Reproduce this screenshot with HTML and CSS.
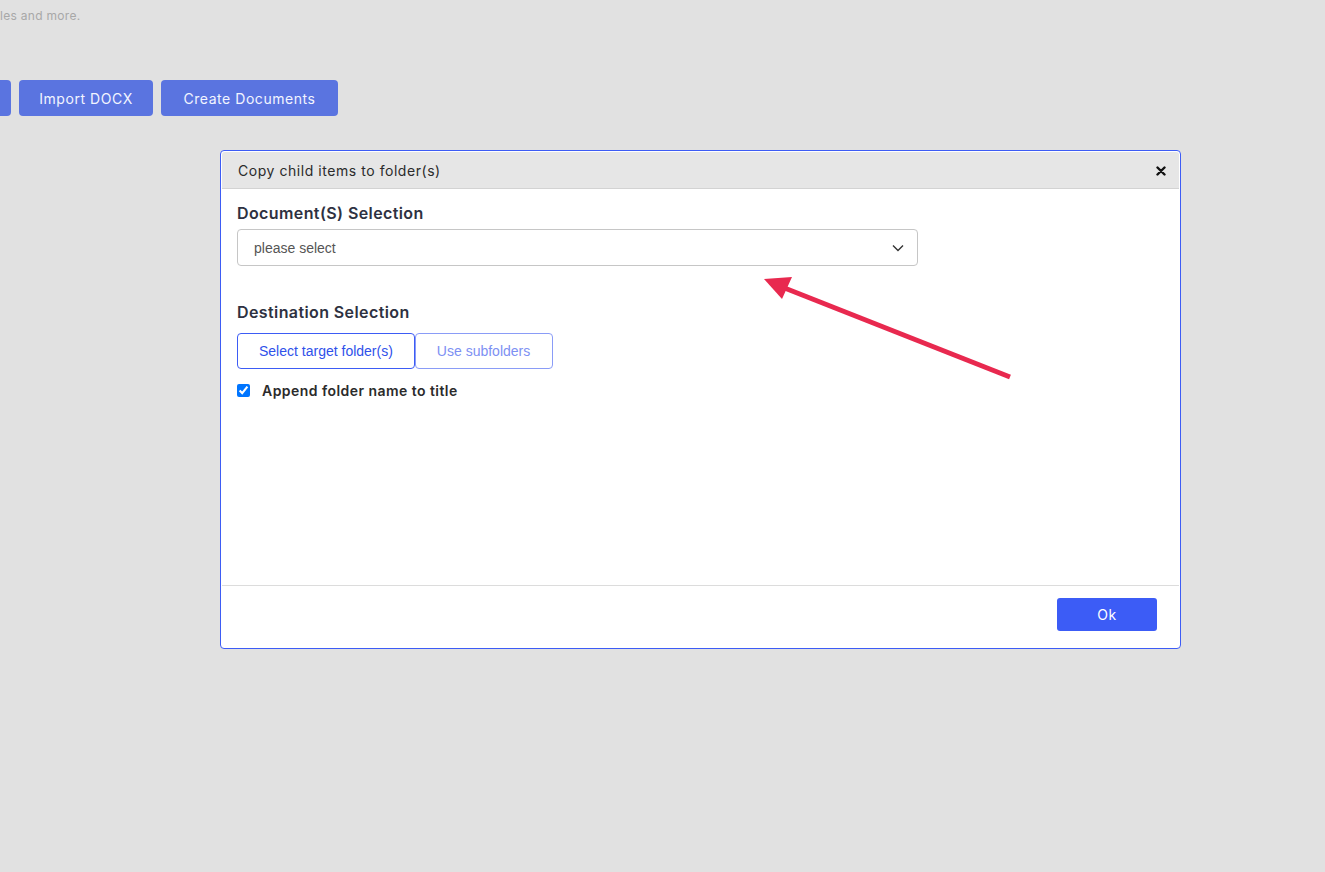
FILE: index.html
```html
<!DOCTYPE html>
<html lang="en">
<head>
<meta charset="utf-8">
<title>Copy child items to folder(s)</title>
<link rel="stylesheet" href="styles.css">
</head>
<body>
<div class="page">
  <p class="intro">les and more.</p>
  <div class="toolbar">
    <button class="tbtn tbtn-partial" aria-label="Export"></button>
    <button class="tbtn tbtn-import">Import DOCX</button>
    <button class="tbtn tbtn-create">Create Documents</button>
  </div>
</div>

<div class="dialog">
  <div class="dialog-header">
    <span class="dialog-title">Copy child items to folder(s)</span>
    <svg class="close" width="10" height="10" viewBox="0 0 10 10"><path d="M1.5 1.5 L8.5 8.5 M8.5 1.5 L1.5 8.5" stroke="#111" stroke-width="2.4" stroke-linecap="round"/></svg>
  </div>
  <div class="dialog-body">
    <h3 class="section-title">Document(S) Selection</h3>
    <div class="select">
      <span>please select</span>
      <svg width="12" height="8" viewBox="0 0 12 8"><path d="M1 1.5 L6 6.5 L11 1.5" fill="none" stroke="#333" stroke-width="1.4"/></svg>
    </div>
    <h3 class="section-title dest">Destination Selection</h3>
    <div class="seg">
      <button class="seg-btn active">Select target folder(s)</button>
      <button class="seg-btn">Use subfolders</button>
    </div>
    <label class="check">
      <input type="checkbox" checked>
      <span>Append folder name to title</span>
    </label>
  </div>
  <div class="dialog-footer">
    <button class="ok">Ok</button>
  </div>
</div>

<svg class="annot" width="1325" height="872" viewBox="0 0 1325 872">
  <line x1="1010" y1="377" x2="782" y2="287" stroke="#e8294f" stroke-width="5"/>
  <polygon points="764,279 792,277 782,299" fill="#e8294f"/>
</svg>
</body>
</html>
```
FILE: styles.css
```css
html, body {
  margin: 0;
  padding: 0;
}
body {
  background: #e1e1e1;
  width: 1325px;
  height: 872px;
  overflow: hidden;
  position: relative;
  font-family: Inter, "Open Sans", sans-serif;
}
.page {
  padding-top: 8px;
}
.intro {
  margin: 0;
  font-size: 12px;
  line-height: 16px;
  color: #a8a8a8;
  letter-spacing: 0.3px;
}
.toolbar {
  display: flex;
  gap: 8px;
  margin-top: 56px;
  margin-left: -89px;
}
.tbtn {
  height: 36px;
  border: none;
  border-radius: 4px;
  background: #5a74e0;
  color: #f2f4ff;
  font-family: Inter, "Open Sans", sans-serif;
  font-size: 14px;
  letter-spacing: 0.55px;
  padding: 0;
}
.tbtn-partial {
  width: 100px;
}
.tbtn-import {
  width: 134px;
}
.tbtn-create {
  width: 177px;
}

.dialog {
  position: absolute;
  left: 220px;
  top: 150px;
  width: 961px;
  height: 499px;
  box-sizing: border-box;
  border: 1px solid #3d5cf5;
  border-radius: 4px;
  background: #fff;
  padding: 1px;
  display: flex;
  flex-direction: column;
}
.dialog-header {
  height: 37px;
  box-sizing: border-box;
  background: #e6e6e6;
  border-bottom: 1px solid #d3d3d3;
  border-radius: 3px 3px 0 0;
  display: flex;
  align-items: center;
  justify-content: space-between;
  padding: 0 13px 0 16px;
}
.dialog-title {
  font-size: 14px;
  letter-spacing: 0.55px;
  color: #2b2b2b;
}
.close {
  margin-top: 2px;
}
.dialog-body {
  flex: 1;
  padding: 13px 15px 0 15px;
}
.section-title {
  margin: 0 0 5px 0;
  font-size: 16px;
  line-height: 22px;
  font-weight: 600;
  letter-spacing: 0.4px;
  color: #2e3141;
}
.section-title.dest {
  margin-top: 35px;
  margin-bottom: 10px;
}
.select {
  width: 681px;
  height: 37px;
  box-sizing: border-box;
  border: 1px solid #c6c6c6;
  border-radius: 4px;
  display: flex;
  align-items: center;
  justify-content: space-between;
  padding: 0 13px 0 16px;
  font-family: "Liberation Sans", Arial, sans-serif;
  font-size: 14px;
  color: #555;
}
.seg {
  display: flex;
}
.seg-btn {
  height: 36px;
  box-sizing: border-box;
  background: #fff;
  border: 1px solid #8a9cf7;
  border-radius: 4px;
  font-family: "Liberation Sans", Arial, sans-serif;
  font-size: 14px;
  color: #7d90f3;
  padding: 0 21px;
}
.seg-btn + .seg-btn {
  padding-right: 22px;
}
.seg-btn.active {
  border-color: #3d5cf5;
  color: #2f51ea;
}
.check {
  display: flex;
  align-items: center;
  gap: 12px;
  margin-top: 11px;
  height: 20px;
  font-size: 14px;
  font-weight: 600;
  letter-spacing: 0.45px;
  color: #2b2b2b;
}
.check input {
  margin: 0;
  width: 13px;
  height: 13px;
}
.dialog-footer {
  border-top: 1px solid #dcdcdc;
  padding: 12px 22px 16px 0;
  display: flex;
  justify-content: flex-end;
}
.ok {
  width: 100px;
  height: 33px;
  border: none;
  border-radius: 3px;
  background: #3c5cf6;
  color: #fff;
  font-family: Inter, "Open Sans", sans-serif;
  font-size: 14px;
  letter-spacing: 0.5px;
}
.annot {
  position: absolute;
  left: 0;
  top: 0;
  pointer-events: none;
}
```
